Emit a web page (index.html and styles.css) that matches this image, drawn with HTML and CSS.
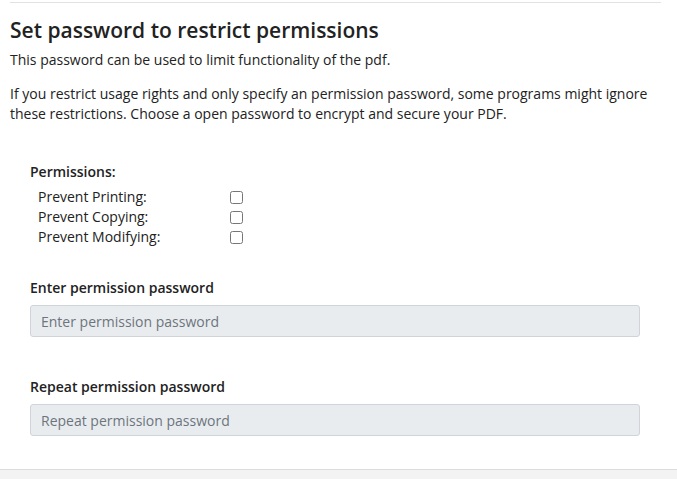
FILE: index.html
```html
<!DOCTYPE html>
<html lang="en">
<head>
    <meta charset="UTF-8">
    <title>Set password</title>
    <link rel="stylesheet" href="styles.css">
</head>
<body>
    <div class="panel">
        <!-- Intro -->
        <h2 class="title">Set password to restrict permissions</h2>
        <p class="lead">This password can be used to limit functionality of the pdf.</p>
        <p class="lead">If you restrict usage rights and only specify an permission password, some programs might ignore these restrictions. Choose a open password to encrypt and secure your PDF.</p>

        <!-- Form -->
        <div class="form">
            <div class="perms">
                <div class="perms-title">Permissions:</div>
                <label class="perm"><span>Prevent Printing:</span><input type="checkbox"></label>
                <label class="perm"><span>Prevent Copying:</span><input type="checkbox"></label>
                <label class="perm"><span>Prevent Modifying:</span><input type="checkbox"></label>
            </div>

            <div class="field">
                <label class="field-label">Enter permission password</label>
                <input class="field-input" type="password" placeholder="Enter permission password">
            </div>

            <div class="field">
                <label class="field-label">Repeat permission password</label>
                <input class="field-input" type="password" placeholder="Repeat permission password">
            </div>
        </div>
    </div>

    <div class="footer"></div>
</body>
</html>
```

FILE: styles.css
```css
/* General */
body {
    margin: 0;
    font-family: "Open Sans", "Noto Sans", sans-serif;
    color: #222;
    background: #fff;
    overflow: hidden;
}

.panel {
    margin: 2px 16px 0 10px;
    border-top: 1px solid #e2e2e2;
    height: 466px;
}

/* Intro */
.title {
    margin: 12px 0 0;
    font-size: 21px;
    font-weight: 600;
    line-height: 30px;
    color: #222;
}

.lead {
    margin: 5px 0 0;
    font-size: 14px;
    line-height: 20px;
    color: #222;
}

.lead + .lead {
    margin-top: 14px;
}

/* Form */
.form {
    padding: 0 21px 0 20px;
}

.perms {
    margin-top: 38px;
}

.perms-title {
    font-size: 14px;
    font-weight: 600;
    line-height: 20px;
    margin-bottom: 5px;
}

.perm {
    display: flex;
    align-items: center;
    padding-left: 8px;
    font-size: 14px;
    line-height: 20px;
}

.perm span {
    width: 192px;
}

.perm input {
    margin: 0;
    width: 13px;
    height: 13px;
}

.field {
    margin-top: 31px;
}

.field + .field {
    margin-top: 40px;
}

.field-label {
    display: block;
    font-size: 14px;
    font-weight: 600;
    line-height: 20px;
    margin-bottom: 7px;
}

.field-input {
    display: block;
    box-sizing: border-box;
    width: 100%;
    height: 32px;
    padding: 0 10px;
    font-family: inherit;
    font-size: 14px;
    color: #222;
    background: #e9ecef;
    border: 1px solid #ced4da;
    border-radius: 3px;
}

.field-input::placeholder {
    color: #6c757d;
}

/* Footer */
.footer {
    height: 20px;
    background: #f3f3f3;
    border-top: 1px solid #dcdcdc;
}
```
